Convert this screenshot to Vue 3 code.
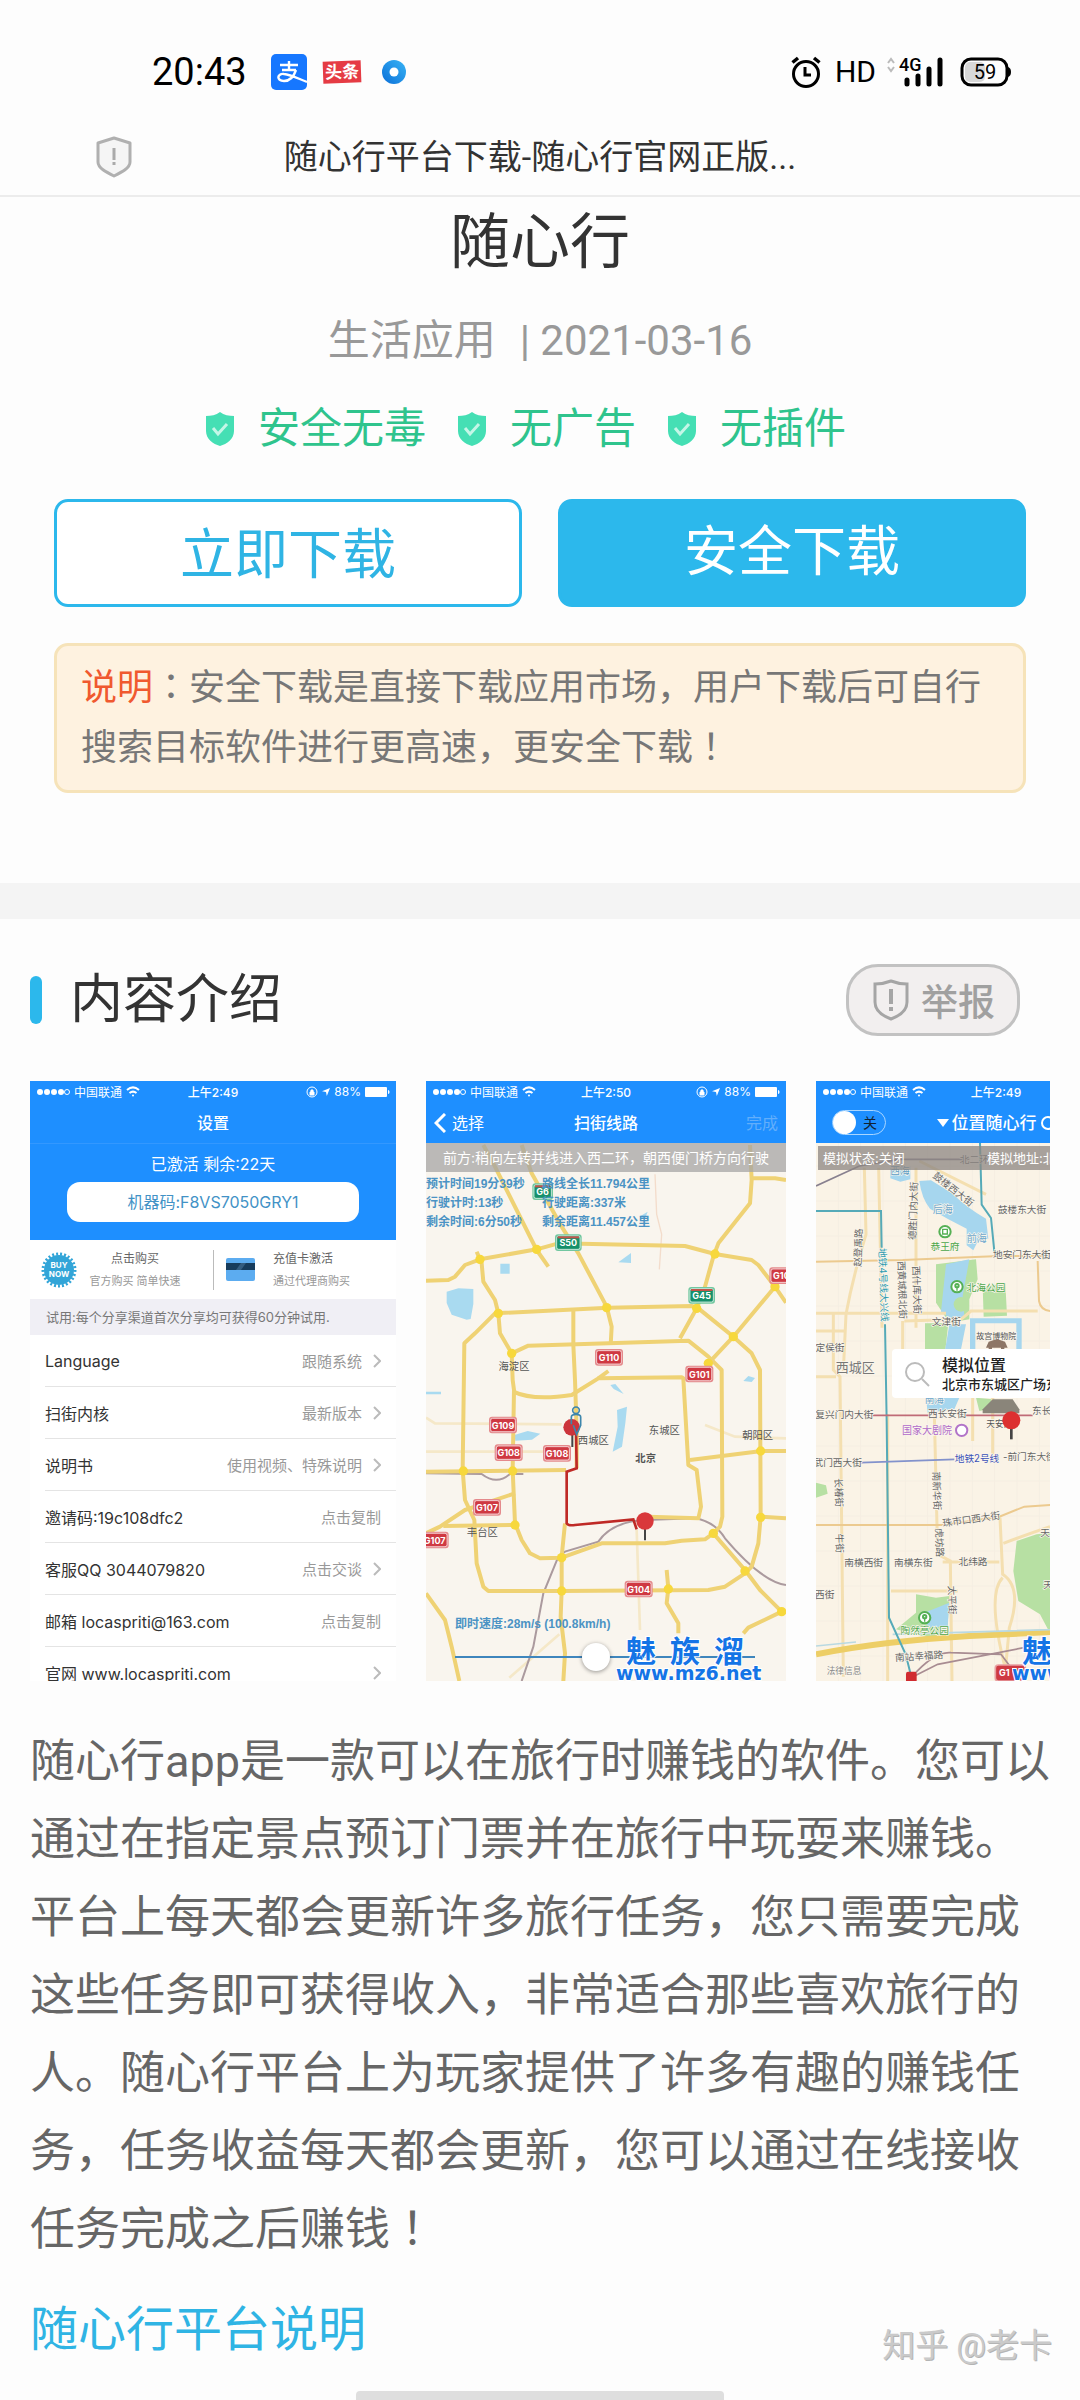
<template>
  <div class="page">
    <div class="status-bar">
      <div class="status-left">
        <span class="clock">20:43</span>
        <svg class="ic-pay" viewBox="0 0 36 36">
          <rect width="36" height="36" rx="5" fill="#1677ff" />
          <g fill="none" stroke="#fff" stroke-width="2.4">
            <path d="M9 11h18M18 7v9M11 16h14" />
            <path d="M25 16c-2 6-6 11-12 11-8 0-7-8 0-7 6 .4 13 4 23 8" />
          </g>
        </svg>
        <span class="ic-news">头条</span>
        <svg class="ic-dot" viewBox="0 0 26 26">
          <defs>
            <linearGradient id="dotFill" x1="0" y1="1" x2="1" y2="0">
              <stop offset="0" stop-color="#0b6fd8" />
              <stop offset="1" stop-color="#38b4f5" />
            </linearGradient>
          </defs>
          <circle cx="13" cy="13" r="12" fill="url(#dotFill)" />
          <circle cx="13" cy="13" r="4.5" fill="#fff" />
        </svg>
      </div>
      <div class="status-right">
        <svg class="ic-alarm" viewBox="0 0 30 32" fill="none" stroke="#000" stroke-width="3">
          <circle cx="15" cy="18" r="12.5" />
          <path d="M1.5 6.5 7 2M28.5 6.5 23 2" stroke-width="3.5" />
          <path d="M14 11v8h6" />
        </svg>
        <span class="hd">HD</span>
        <svg class="ic-signal" viewBox="0 0 58 32">
          <path d="M2 7l3-4 3 4M2 11l3 4 3-4" fill="none" stroke="#bbb" stroke-width="2" />
          <text x="13" y="15" font-size="18" font-weight="500" fill="#000">4G</text>
          <g stroke="#000" stroke-width="5" stroke-linecap="round">
            <path d="M21 24v4M32 20v8M43 13v15M54 4v24" />
          </g>
        </svg>
        <svg class="ic-battery" viewBox="0 0 52 30">
          <rect x="5" y="5" width="20" height="20" rx="5" fill="#d8d8d8" />
          <rect x="2" y="2" width="45" height="26" rx="9" fill="none" stroke="#000" stroke-width="3" />
          <path d="M48 10c4 1 4 9 0 10z" fill="#000" />
          <text x="25" y="22" font-size="20" text-anchor="middle" fill="#000">59</text>
        </svg>
      </div>
    </div>

    <header class="nav">
      <svg class="nav-shield" viewBox="0 0 38 42">
        <path d="M19 2 35 7v19c0 6-8 10-16 14C11 36 3 32 3 26V7z" fill="#f5f5f5" stroke="#b0b0b0" stroke-width="3" stroke-linejoin="round" />
        <path d="M19 12v12M19 26v3" stroke="#aaa" stroke-width="3" />
      </svg>
      <span class="nav-title">随心行平台下载-随心行官网正版...</span>
    </header>

    <section class="hero">
      <h1>随心行</h1>
      <p class="meta"><span>生活应用</span><span class="date">| 2021-03-16</span></p>
      <ul class="badges">
        <li v-for="b in badges" :key="b">
          <svg viewBox="0 0 32 36">
            <path d="M16 1c4 3 9 4 14 4v15c0 8-7 13-14 15C9 33 2 28 2 20V5c5 0 10-1 14-4z" fill="#45dfb4" />
            <path d="M9 17l5 6 9-10" fill="none" stroke="#c4f6e7" stroke-width="3" />
          </svg>
          {{ b }}
        </li>
      </ul>
      <div class="actions">
        <button class="btn" type="button">立即下载</button>
        <button class="btn solid" type="button">安全下载</button>
      </div>
      <p class="note"><em>说明</em><span class="mid">：</span>安全下载是直接下载应用市场，用户下载后可自行搜索目标软件进行更高速，更安全下载<span class="mid">！</span></p>
    </section>

    <section class="intro">
      <div class="intro-head">
        <h2>内容介绍</h2>
        <button class="report" type="button">
          <svg viewBox="0 0 40 44" fill="none" stroke="#a5a5a5" stroke-width="3">
            <path d="M20 3c5 2 10 3 16 3v18c0 9-8 14-16 17C12 38 4 33 4 24V6c6 0 11-1 16-3z" />
            <path d="M20 11v15M20 29v4" stroke-width="4" />
          </svg>
          举报
        </button>
      </div>

      <div class="gallery">
        <article v-for="shot in shots" :key="shot.id" class="shot" :class="shot.id">
          <div class="ios-bar">
            <span class="carrier">
              <svg class="dots" viewBox="0 0 34 8" fill="#fff">
                <circle v-for="n in 4" :key="n" :cx="n * 7 - 3" cy="4" r="3" />
                <circle cx="31" cy="4" r="2.5" fill="none" stroke="#fff" />
              </svg>
              中国联通
              <svg class="wifi" viewBox="0 0 14 11" fill="none" stroke="#fff" stroke-width="2">
                <path d="M1 4c4-3.5 8-3.5 12 0M3.5 7c2.500-2 4.500-2 7 0" />
                <circle cx="7" cy="9.5" r="1" fill="#fff" stroke="none" />
              </svg>
            </span>
            <b>{{ shot.time }}</b>
            <span class="power">
              <svg class="lock" viewBox="0 0 12 12" fill="none" stroke="#fff">
                <circle cx="6" cy="6" r="5" />
                <path d="M4 6h4v3H4zM5 6V4h2v2" fill="#fff" />
              </svg>
              <svg class="arrow" viewBox="0 0 10 10" fill="#fff"><path d="M10 0 6 10 5 5 0 4z" /></svg>
              88%
              <svg class="cell" viewBox="0 0 25 10" fill="#fff"><rect width="22" height="10" rx="1" /><path d="M23 3c2 0 2 4 0 4z" /></svg>
            </span>
          </div>

          <template v-if="shot.id === 'settings'">
            <div class="shot-nav"><span></span><strong>设置</strong><span></span></div>
            <div class="active-box">
              <span>已激活 剩余:22天</span>
              <div class="code">机器码:F8VS7050GRY1</div>
            </div>
            <div class="buy">
              <svg class="buy-now" viewBox="0 0 36 36">
                <circle cx="18" cy="18" r="15" fill="#32a5d8" />
                <circle cx="18" cy="18" r="16" fill="none" stroke="#32a5d8" stroke-width="3" stroke-dasharray="2 2" />
                <text x="18" y="16" font-size="8" font-weight="700" text-anchor="middle" fill="#fff">BUY</text>
                <text x="18" y="25" font-size="8" font-weight="700" text-anchor="middle" fill="#fff">NOW</text>
              </svg>
              <div class="buy-text"><span>点击购买</span><small>官方购买 简单快速</small></div>
              <i class="split"></i>
              <svg class="bank-card" viewBox="0 0 29 23">
                <rect width="29" height="23" rx="2" fill="#5cacf0" />
                <rect y="5" width="29" height="7" fill="#173c5c" />
                <path d="M10 12l5-7h5l-5 7z" fill="#345d80" />
              </svg>
              <div class="buy-text left"><span>充值卡激活</span><small>通过代理商购买</small></div>
            </div>
            <div class="trial">试用:每个分享渠道首次分享均可获得60分钟试用.</div>
            <div v-for="row in rows" :key="row.name" class="row">
              <span>{{ row.name }}</span>
              <span class="row-value">{{ row.value }}</span>
              <svg v-if="row.link" viewBox="0 0 8 14" fill="none" stroke="#bbb" stroke-width="2"><path d="M1 1l6 6-6 6" /></svg>
            </div>
          </template>

          <template v-else-if="shot.id === 'route'">
            <div class="shot-nav">
              <span class="back">
                <svg viewBox="0 0 12 20" fill="none" stroke="#fff" stroke-width="3"><path d="M11 1 2 10l9 9" /></svg>
                选择
              </span>
              <strong>扫街线路</strong>
              <span class="faded">完成</span>
            </div>
            <div class="map">
              <svg viewBox="0 186 1080 1614">
                <rect y="186" width="1080" height="1614" fill="#f9f5ee" />
                <g fill="#a9daf0">
                  <path d="M62 632l35-10 45 2v45l-8 45-12 2-45-15-15-35zM223 548h28v30h-28zM577 544l38-28v30zM640 407l25-15-8 22zM265 1062l40-12 38 8-25 18-50 3zM573 987l30-10-5 50-10 70-28 15 15-75zM553 912l15-3 25 30-30-15zM952 900l15-15 20 6-10 12zM0 932h45v8H0z" />
                </g>
                <g fill="none" stroke="#f5e8c8" stroke-width="8">
                  <path d="M0 1010l27 17 380 3M0 1112h407M632 1347l10 300M837 1032l90 35 153 5M400 1660l-150 130" />
                </g>
                <path d="M687 280l5 120 15 60-7 105" fill="none" stroke="#f3dccb" stroke-width="4" />
                <g fill="none" stroke="#ab9a9e" stroke-width="6">
                  <path d="M287 1800l35-103 30-160 45-110 20-15 100-30q40-60 140-65l150-5q60 10 90 60 110 130 183 140" />
                  <path d="M0 1177l167 2q45 35 85 0h40" />
                </g>
                <g fill="none" stroke="#efd274" stroke-width="12" stroke-linejoin="round">
                  <path v-for="(d, i) in roads" :key="i" :d="d" />
                </g>
                <g fill="#f7d83c">
                  <circle v-for="(p, i) in junctions" :key="i" :cx="p[0]" :cy="p[1]" r="14" />
                </g>
                <path d="M450 1047l2 115-30 10v155q5 8 25 5l175-17 10 30" fill="none" stroke="#bf2a26" stroke-width="8" />
                <g font-size="31" fill="#555" text-anchor="middle">
                  <text v-for="l in districts" :key="l.t" :x="l.x" :y="l.y" :font-weight="l.w">{{ l.t }}</text>
                </g>
                <g v-for="(s, i) in shields" :key="i" font-size="27" font-weight="700" text-anchor="middle">
                  <rect :x="s.x - s.w / 2" :y="s.y - 25" :width="s.w" height="50" rx="9" :fill="s.green ? '#72c7a0' : '#e48a8c'" />
                  <rect :x="s.x - s.w / 2 + 5" :y="s.y - 20" :width="s.w - 10" height="40" rx="6" :fill="s.green ? '#16906a' : '#cf3942'" stroke="#fff" stroke-width="2" />
                  <path v-if="s.green" :d="`M${s.x - s.w / 2 + 8} ${s.y - 16}h${s.w - 16}`" stroke="#c4544a" stroke-width="6" />
                  <text :x="s.x" :y="s.y + 11" fill="#fff">{{ s.t }}</text>
                </g>
                <path d="M439 1050v48M657 1330v48" stroke="#444" stroke-width="6" />
                <circle cx="437" cy="1039" r="25" fill="#cc343b" />
                <circle cx="657" cy="1320" r="26" fill="#d9383b" />
                <g fill="none" stroke="#3d86ac" stroke-width="5">
                  <circle cx="450" cy="988" r="10" />
                  <path d="M436 1030v-22q0-8 14-8t14 8v25l-12 27-10-27" />
                </g>
              </svg>
              <div class="guide">前方:稍向左转并线进入西二环，朝西便门桥方向行驶</div>
              <div class="stats">
                <span v-for="s in stats" :key="s">{{ s }}</span>
              </div>
              <div class="speed">
                <label for="speed">即时速度:28m/s (100.8km/h)</label>
                <input id="speed" type="range" min="0" max="60" value="28" />
              </div>
              <svg class="mark" viewBox="0 0 150 50" fill="#1474e6" stroke="#fff" stroke-width="2" paint-order="stroke" font-weight="700">
                <text x="10" y="27" font-size="30">魅</text>
                <text x="54" y="27" font-size="30">族</text>
                <text x="98" y="27" font-size="30">溜</text>
                <text x="0" y="45" class="site">www.mz6.net</text>
              </svg>
            </div>
          </template>

          <template v-else>
            <div class="shot-nav">
              <label class="toggle"><input type="checkbox" /><i></i>关</label>
              <strong class="place"><svg viewBox="0 0 12 8"><path d="M0 0h12L6 8z" fill="#fff" /></svg>位置随心行<svg class="loop" viewBox="0 0 16 16"><circle cx="8" cy="8" r="6" fill="none" stroke="#fff" stroke-width="2" /></svg></strong>
              <span></span>
            </div>
            <div class="map">
              <svg viewBox="0 186 1080 1614">
                <rect y="186" width="1080" height="1614" fill="#faf3e6" />
                <g fill="none" stroke="#f5eee2" stroke-width="3">
                  <path v-for="n in 16" :key="n" :d="`M0 ${n * 105 + 150}h1080M${n * 67} 186v1614`" />
                </g>
                <g fill="#b7e0a3">
                  <path d="M360 550l120-15 5 60-25 60v60l-60 10-40-60zM500 618l68-12 5 98-70 3zM327 727h70l-10 90h-60zM480 950l50 5 10 25-50 10zM240 1645l60-50v-55l60 10 40-5-5 90 5 20-60 15zM592 1470l10-90 60-20 100-10v420l-90-170-65-40zM0 1205l30 8 5 25-35 12z" />
                </g>
                <g fill="#a6d6ee">
                  <path d="M223 260l60-5v40l-30 7-30-10zM310 300l35-2 65 40q40 40 100 75l7 60-30 5-15 30-20-15v-50q-60-30-110-60-25-30-32-83zM390 550l70-15-20 110 5 60-20 22-50-35zM400 730h50l-15 75-50 15zM330 950h100l-15 35-80 10zM325 1595l75-30-5 70-50 5-20-15z" />
                  <path d="M462 712h155v105h-16v-90H478v90h-16z" />
                </g>
                <circle cx="435" cy="670" r="22" fill="#b7e0a3" />
                <g fill="none" stroke="#f4dfb0" stroke-width="9">
                  <path d="M145 260l5 200q-40 130-60 240l-8 170M188 260l10 480M300 260v480M0 697h390M0 750h90M52 697v170l20 20 10 900M215 1000v800M260 720v160M355 1000l10 420 38 20 5 360M265 720l170-5 30-25h200M552 1310l8 170q60 40 20 160l-15 160M560 1490q-50 50 10 280M562 1387q80-30 140-50M225 1530h200M380 1443h170M0 887h60M530 900v220M470 950v130M310 240l200 100" />
                </g>
                <g fill="none" stroke="#ecca8f" stroke-width="6">
                  <path d="M0 542l260-5 290-12h530M0 1332h380l170-25 75-30 150-10M665 540l4 120q5 30 40 30" />
                </g>
                <path d="M0 1720q200-40 460-55l620-30" fill="none" stroke="#edce66" stroke-width="18" />
                <path d="M0 1695l120-12M230 1660l850-25" fill="none" stroke="#b9d9e2" stroke-width="5" />
                <g fill="none" stroke="#55aab8" stroke-width="6">
                  <path d="M0 390h195l2 110M207 730l5 290 7 590 50 110 15 60M492 186l5 185 28 40 10 100" />
                </g>
                <path d="M0 315l130-60 120-20h210" fill="none" stroke="#88808f" stroke-width="5" />
                <path d="M170 1003h170M450 1003h200" stroke="#bf6b77" stroke-width="5" />
                <path d="M135 1145l280-10" stroke="#8292cc" stroke-width="5" />
                <path d="M285 1790l80-40 310-60M285 1790q70-80 120-75l150 5 60 80" fill="none" stroke="#a88c92" stroke-width="5" />
                <g text-anchor="middle" paint-order="stroke" stroke="#fbf6ec" stroke-width="4">
                  <text
                    v-for="(l, i) in streets"
                    :key="i"
                    :transform="`translate(${l[1]} ${l[2]}) rotate(${l[3] || 0})`"
                    dy="10"
                    :font-size="l[5] || 29"
                    :fill="l[4] || '#666'"
                  >{{ l[0] }}</text>
                </g>
                <g fill="none" stroke="#55b054" stroke-width="6">
                  <circle cx="387" cy="452" r="17" fill="#fff" /><path d="M380 445h14v14h-14z" stroke-width="4" />
                  <circle cx="423" cy="617" r="17" fill="#fff" /><circle cx="423" cy="614" r="5" /><path d="M423 617v12" stroke-width="4" />
                  <circle cx="326" cy="1610" r="17" fill="#fff" /><circle cx="326" cy="1607" r="5" /><path d="M326 1610v12" stroke-width="4" />
                </g>
                <circle cx="437" cy="1048" r="17" fill="#fff" stroke="#b274c9" stroke-width="6" />
                <path d="M510 800h65l-8-18-24-8-25 8zM518 800h10v14h-10zM555 800h10v14h-10z" fill="#8d7666" />
                <path d="M500 985l30-30h60l20 30v12H500z" fill="#8a857a" />
                <path d="M586 1020v55" stroke="#444" stroke-width="8" />
                <circle cx="586" cy="1018" r="27" fill="#dc3030" />
                <rect x="270" y="1772" width="32" height="34" rx="6" fill="#d02b30" />
                <rect x="538" y="1752" width="90" height="48" rx="9" fill="#cf3942" stroke="#e8a0a2" stroke-width="5" />
                <text x="565" y="1786" font-size="27" font-weight="700" text-anchor="middle" fill="#fff">G1</text>
              </svg>
              <div class="sim"><span>模拟状态:关闭</span><span>模拟地址:北京市东城区</span></div>
              <div class="callout">
                <svg viewBox="0 0 26 26" fill="none" stroke="#bbb" stroke-width="2"><circle cx="11" cy="11" r="9" /><path d="M18 18l7 7" /></svg>
                <div><strong>模拟位置</strong><span>北京市东城区广场东侧路</span></div>
              </div>
              <svg class="mark" viewBox="0 0 150 50" fill="#1474e6" stroke="#fff" stroke-width="2" paint-order="stroke" font-weight="700">
                <text x="10" y="27" font-size="30">魅</text>
                <text x="54" y="27" font-size="30">族</text>
                <text x="98" y="27" font-size="30">溜</text>
                <text x="0" y="45" class="site">www.mz6.net</text>
              </svg>
            </div>
          </template>
        </article>
      </div>

      <p class="desc">随心行app是一款可以在旅行时赚钱的软件。您可以通过在指定景点预订门票并在旅行中玩耍来赚钱。平台上每天都会更新许多旅行任务，您只需要完成这些任务即可获得收入，非常适合那些喜欢旅行的人。随心行平台上为玩家提供了许多有趣的赚钱任务，任务收益每天都会更新，您可以通过在线接收任务完成之后赚钱<span class="mid">！</span></p>
      <a class="more" href="#">随心行平台说明</a>
    </section>

    <span class="watermark">知乎 @老卡</span>
    <i class="home-bar"></i>
  </div>
</template>

<script setup>
const badges = ['安全无毒', '无广告', '无插件'];

const shots = [
  { id: 'settings', time: '上午2:49' },
  { id: 'route', time: '上午2:50' },
  { id: 'place-map', time: '上午2:49' }
];

const rows = [
  { name: 'Language', value: '跟随系统', link: true },
  { name: '扫街内核', value: '最新版本', link: true },
  { name: '说明书', value: '使用视频、特殊说明', link: true },
  { name: '邀请码:19c108dfc2', value: '点击复制', link: false },
  { name: '客服QQ 3044079820', value: '点击交谈', link: true },
  { name: '邮箱 locaspriti@163.com', value: '点击复制', link: false },
  { name: '官网 www.locaspriti.com', value: '', link: true }
];

const stats = [
  '预计时间19分39秒', '路线全长11.794公里',
  '行驶计时:13秒', '行驶距离:337米',
  '剩余时间:6分50秒', '剩余距离11.457公里'
];

// 地图坐标为 3 倍尺寸
const roads = [
  'M172 192L207 257 332 507 367 557',
  'M287 192L317 277 407 437 457 517 542 677 557 737 554 792',
  'M0 599L67 597 87 587 117 552 162 535 332 505 397 487 777 495 867 519 977 537 997 552 1047 617 1080 665',
  'M152 512L167 547 172 602 207 657 217 697 222 757 257 817 260 897 264 927 260 1167 267 1327 287 1377 312 1417 342 1432 407 1430 527 1387 717 1387 767 1379 837 1375 862 1357 882 1337 889 1307 887 867 877 857 847 827 787 779 307 794 257 817',
  'M972 192L977 297 972 367 877 487 862 527 837 617 812 682 762 772',
  'M977 292L1047 292 1080 297',
  'M114 867L115 787 147 757 207 697 547 680 797 675 817 682 922 767 977 817 1002 867 1004 1307 997 1387 977 1457 957 1477 897 1517 847 1527 407 1530 187 1530 172 1517 152 1447 145 1317 117 1257 110 1167z',
  'M1047 617L922 767 847 847',
  'M442 687L442 792 447 897 452 1047 452 1162',
  'M262 932Q320 960 437 942L517 892 767 889 772 892 787 1152 812 1167 825 1277 817 1312 667 1307',
  'M517 892L547 870',
  'M0 1172L420 1167',
  'M792 1137L1007 1110 1080 1110',
  'M1004 1307L1080 1312',
  'M417 1327L407 1427 407 1527 404 1607 417 1717 412 1800',
  'M862 1357L957 1467 1002 1527 1067 1592 1080 1592',
  'M1067 1592L967 1640 952 1657',
  'M0 1537L57 1617 77 1697 100 1800',
  'M722 1467L727 1522 722 1567 757 1627 757 1657',
  'M0 1357L42 1337 117 1287 267 1237',
  'M52 1335L267 1332'
];

const junctions = [
  [162, 535], [332, 505], [867, 519], [1047, 617], [217, 697], [542, 680], [812, 682],
  [922, 767], [257, 817], [847, 847], [112, 1170], [260, 1170], [267, 1332], [407, 1430],
  [407, 1530], [862, 1357], [957, 1470], [727, 1524], [1004, 1110], [1004, 1309], [1067, 1592]
];

const districts = [
  { t: '海淀区', x: 264, y: 866 },
  { t: '西城区', x: 502, y: 1090 },
  { t: '东城区', x: 715, y: 1058 },
  { t: '朝阳区', x: 995, y: 1075 },
  { t: '北京', x: 659, y: 1143, w: 700 },
  { t: '丰台区', x: 169, y: 1365 }
];

const shields = [
  { t: 'G6', x: 350, y: 332, w: 62, green: true },
  { t: 'S50', x: 427, y: 485, w: 80, green: true },
  { t: 'G45', x: 827, y: 643, w: 80, green: true },
  { t: 'G101', x: 1072, y: 584, w: 84 },
  { t: 'G110', x: 549, y: 829, w: 84 },
  { t: 'G101', x: 820, y: 879, w: 84 },
  { t: 'G109', x: 231, y: 1032, w: 84 },
  { t: 'G108', x: 248, y: 1115, w: 84 },
  { t: 'G108', x: 393, y: 1117, w: 84 },
  { t: 'G107', x: 183, y: 1279, w: 84 },
  { t: 'G107', x: 26, y: 1377, w: 84 },
  { t: 'G104', x: 638, y: 1524, w: 84 }
];

// 文字, x, y, 角度, 颜色, 字号
const streets = [
  ['西海', 252, 270, 0, '#5b9cc4'],
  ['鼓楼西大街', 412, 325, 38],
  ['德胜门内大街', 292, 390, -88],
  ['后海', 380, 385, 0, '#6fa8cc', 30],
  ['前海', 482, 472, 0, '#6fa8cc', 30],
  ['鼓楼东大街', 618, 385],
  ['恭王府', 387, 497, 0, '#4ba64a'],
  ['地安门东大街', 618, 520],
  ['赵登禹路', 127, 500, -88],
  ['地铁4号线大兴线', 202, 612, 88, '#2d9bb0'],
  ['西黄城根北街', 258, 627, 88],
  ['西什库大街', 302, 627, 88],
  ['北海公园', 510, 620, 0, '#4ba64a'],
  ['文津街', 391, 722],
  ['故宫博物院', 541, 765, 0, '#555', 24],
  ['定侯街', 42, 799],
  ['西城区', 118, 862, 0, '#777', 39],
  ['北二环', 475, 235],
  ['南海', 355, 957, 0, '#6fa8cc'],
  ['复兴门内大街', 85, 1002],
  ['西长安街', 394, 998],
  ['东长安街', 706, 990],
  ['天安门', 550, 1028, 0, '#555', 26],
  ['国家大剧院', 333, 1050, 0, '#b06ac9', 30],
  ['武门西大街', 65, 1145],
  ['地铁2号线', 483, 1133, 0, '#3a51b8'],
  ['-前门东大街', 640, 1128],
  ['长椿街', 68, 1235, 88],
  ['南新华街', 362, 1230, 88],
  ['珠市口西大街', 466, 1315, -8],
  ['牛街', 70, 1387, 88],
  ['虎坊路', 370, 1385, 88],
  ['南横西街', 143, 1444],
  ['南横东街', 292, 1444],
  ['北纬路', 471, 1442],
  ['天坛', 702, 1355],
  ['西街', 26, 1542],
  ['太平街', 408, 1557, 88],
  ['天坛公园', 740, 1512],
  ['陶然亭公园', 326, 1650, 0, '#4ba64a'],
  ['南站幸福路', 309, 1726, -4],
  ['法律信息', 84, 1770, 0, '#888', 26]
];
</script>

<style>
body {
  margin: 0;
  background: #fdfdfd;
}
</style>

<style scoped>
.page {
  position: relative;
  min-height: 100vh;
  background: #fdfdfd;
  color: #333;
  font-family: Roboto, 'Noto Sans CJK SC', sans-serif;
  overflow: hidden;
}
.page * {
  box-sizing: border-box;
}
h1, h2, p, ul {
  margin: 0;
  padding: 0;
  font-weight: 400;
}
button {
  font-family: inherit;
  cursor: pointer;
}
svg {
  display: block;
  flex-shrink: 0;
}
.mid {
  font-family: 'Noto Sans CJK TC', sans-serif;
  line-height: 1;
}

.status-bar {
  display: flex;
  justify-content: space-between;
  align-items: center;
  height: 116px;
  padding: 28px 68px 0 152px;
  color: #000;
}
.status-left,
.status-right {
  display: flex;
  align-items: center;
}
.clock {
  margin-right: 24px;
  font-size: 38px;
}
.ic-pay { width: 36px; height: 36px; }
.ic-news {
  margin: 0 20px 0 16px;
  padding: 0 2px;
  background: #e53b44;
  color: #fff;
  font-size: 17px;
  font-weight: 700;
  line-height: 22px;
  transform: rotate(-2deg);
}
.ic-dot { width: 26px; height: 26px; }
.ic-alarm { width: 30px; height: 32px; }
.hd {
  margin: 0 10px 0 14px;
  font-size: 30px;
  line-height: 32px;
}
.ic-signal { width: 58px; height: 32px; }
.ic-battery { width: 52px; height: 30px; margin-left: 16px; }

.nav {
  display: grid;
  grid-template-columns: 1fr auto 1fr;
  align-items: center;
  height: 81px;
  padding: 2px 95px 0;
  border-bottom: 2px solid #ececec;
}
.nav-shield { width: 38px; height: 42px; }
.nav-title {
  font-size: 34px;
  line-height: 48px;
}

.hero {
  padding: 10px 54px 90px;
  border-bottom: 36px solid #f4f4f4;
}
.hero h1 {
  font-size: 60px;
  line-height: 72px;
  text-align: center;
}
.meta {
  display: flex;
  justify-content: center;
  gap: 24px;
  margin-top: 32px;
  color: #999;
  font-size: 42px;
  line-height: 60px;
}
.badges {
  display: flex;
  justify-content: center;
  gap: 30px;
  margin-top: 28px;
  padding-right: 30px;
  color: #2fc48d;
  font-size: 42px;
  line-height: 60px;
  list-style: none;
}
.badges li {
  display: flex;
  align-items: center;
  gap: 22px;
}
.badges svg { width: 32px; height: 36px; }
.actions {
  display: grid;
  grid-template-columns: 1fr 1fr;
  gap: 36px;
  margin-top: 40px;
}
.btn {
  height: 108px;
  padding: 0 0 6px;
  border: 3px solid #2cb8ec;
  border-radius: 14px;
  background: #fff;
  color: #2fb4e4;
  font-size: 54px;
}
.btn.solid {
  padding-bottom: 12px;
  background: #2cb8ec;
  color: #fff;
}
.note {
  margin-top: 36px;
  padding: 12px 24px;
  border: 3px solid #f6e3b9;
  border-radius: 14px;
  background: #fef2e0;
  color: #777;
  font-size: 36px;
  line-height: 60px;
}
.note em {
  color: #f0592f;
  font-style: normal;
}

.intro { padding: 45px 30px 34px; }
.intro-head {
  display: flex;
  justify-content: space-between;
  align-items: center;
  padding-right: 30px;
}
.intro-head h2 {
  display: flex;
  align-items: center;
  gap: 28px;
  font-size: 53px;
  line-height: 72px;
}
.intro-head h2::before {
  content: '';
  width: 12px;
  height: 48px;
  border-radius: 6px;
  background: #2cb8ec;
}
.report {
  display: flex;
  align-items: center;
  justify-content: center;
  gap: 10px;
  width: 174px;
  height: 72px;
  padding: 0;
  border: 3px solid #c2c2c2;
  border-radius: 32px;
  background: #f2efef;
  color: #a0a0a0;
  font-size: 37px;
  font-weight: 500;
}
.report svg { width: 40px; height: 44px; }

.gallery {
  display: flex;
  gap: 30px;
  margin-top: 45px;
  overflow: hidden;
  font-family: Inter, 'Noto Sans CJK SC', sans-serif;
}
.shot {
  flex: none;
  width: 360px;
  height: 600px;
  background: #fff;
  overflow: hidden;
}
.shot.settings { width: 366px; }
.ios-bar {
  display: grid;
  grid-template-columns: 1fr auto 1fr;
  align-items: center;
  height: 21px;
  padding: 0 6px;
  background: #1e8fff;
  color: #fff;
  font-size: 12px;
}
.ios-bar b { font-weight: 500; }
.carrier,
.power {
  display: flex;
  align-items: center;
  gap: 4px;
}
.power { justify-content: flex-end; }
.dots { width: 34px; height: 8px; }
.wifi { width: 14px; height: 11px; }
.lock { width: 12px; height: 12px; }
.arrow { width: 8px; height: 8px; }
.cell { width: 25px; height: 10px; }
.shot-nav {
  display: grid;
  grid-template-columns: 1fr auto 1fr;
  align-items: center;
  height: 41px;
  padding: 0 8px;
  background: #1e8fff;
  color: #fff;
  font-size: 16px;
  line-height: 24px;
}
.shot-nav strong { font-weight: 500; }
.back {
  display: flex;
  align-items: center;
  gap: 6px;
}
.back svg { width: 12px; height: 20px; }
.faded {
  color: #62aefb;
  text-align: right;
}

.active-box {
  height: 97px;
  padding: 8px 37px 18px;
  border-top: 1px solid #3398ff;
  background: #1e8fff;
  color: #fff;
  font-size: 16px;
  line-height: 24px;
  text-align: center;
}
.code {
  margin-top: 6px;
  border-radius: 13px;
  background: #fff;
  color: #4292c6;
  line-height: 40px;
}
.buy {
  display: flex;
  align-items: center;
  height: 59px;
  padding-left: 11px;
  color: #666;
}
.buy-now { width: 36px; height: 36px; }
.buy-text {
  display: flex;
  flex-direction: column;
  width: 116px;
  align-items: center;
  font-size: 12px;
  line-height: 22px;
}
.buy-text small {
  color: #999;
  font-size: 11px;
}
.buy-text.left { align-items: flex-start; }
.split {
  width: 1px;
  height: 40px;
  margin: 0 12px 0 20px;
  background: #bbb;
}
.bank-card { width: 29px; height: 23px; margin-right: 18px; }
.trial {
  padding-left: 16px;
  background: #f0eff5;
  color: #777;
  font-size: 13px;
  line-height: 36px;
  white-space: nowrap;
}
.row {
  display: flex;
  align-items: center;
  gap: 11px;
  height: 52px;
  margin-left: 15px;
  padding-right: 15px;
  border-bottom: 1px solid #e4e4e4;
  color: #333;
  font-size: 16px;
  white-space: nowrap;
}
.row-value {
  margin-left: auto;
  color: #999;
  font-size: 15px;
}
.row svg { width: 8px; height: 14px; }

.map {
  position: relative;
  height: 538px;
}
.guide {
  position: absolute;
  top: 0;
  left: 0;
  right: 0;
  background: rgba(166, 164, 164, 0.75);
  color: #fff;
  font-size: 14px;
  line-height: 29px;
  text-align: center;
  white-space: nowrap;
}
.stats {
  position: absolute;
  top: 32px;
  left: 0;
  display: grid;
  grid-template-columns: 116px auto;
  color: #4b93c4;
  font-family: 'Liberation Sans', 'Noto Sans CJK SC', sans-serif;
  font-size: 12px;
  font-weight: 600;
  line-height: 19px;
  white-space: nowrap;
}
.speed {
  position: absolute;
  left: 29px;
  right: 31px;
  bottom: 10px;
  display: flex;
  flex-direction: column;
  gap: 12px;
  color: #4b93c4;
  font-family: 'Liberation Sans', 'Noto Sans CJK SC', sans-serif;
  font-size: 12px;
  font-weight: 600;
}
.speed input {
  width: 100%;
  height: 28px;
  margin: 0;
  appearance: none;
  background: linear-gradient(#3f86bd, #3f86bd) center / 100% 2px no-repeat;
}
.speed input::-webkit-slider-thumb {
  width: 28px;
  height: 28px;
  appearance: none;
  border-radius: 50%;
  background: #fff;
  box-shadow: 0 1px 4px rgba(0, 0, 0, 0.4);
}
.mark {
  position: absolute;
  left: 190px;
  bottom: -4px;
  width: 150px;
  height: 50px;
}
.place-map .mark { left: 196px; }
.site {
  font-family: 'DejaVu Sans', sans-serif;
  font-size: 19px;
  font-weight: 700;
}

.toggle {
  position: relative;
  display: flex;
  align-items: center;
  justify-content: flex-end;
  width: 54px;
  height: 25px;
  margin-left: 8px;
  padding-right: 8px;
  border: 1px solid #a9d6ff;
  border-radius: 13px;
  color: #123;
  font-size: 14px;
}
.toggle input {
  position: absolute;
  inset: 0;
  margin: 0;
  opacity: 0;
}
.toggle i {
  width: 23px;
  height: 23px;
  margin-right: auto;
  border-radius: 50%;
  background: #fff;
}
.place {
  display: flex;
  align-items: center;
  gap: 3px;
  font-size: 17px;
}
.place svg { width: 12px; height: 8px; }
.place .loop { width: 16px; height: 16px; }
.sim {
  position: absolute;
  top: 3px;
  left: 2px;
  right: 0;
  display: grid;
  grid-template-columns: 164px auto;
  padding-left: 5px;
  background: rgba(140, 134, 130, 0.75);
  color: #fff;
  font-size: 13px;
  line-height: 24px;
  white-space: nowrap;
}
.callout {
  position: absolute;
  top: 206px;
  left: 76px;
  right: 0;
  display: flex;
  align-items: center;
  gap: 12px;
  height: 49px;
  padding-left: 12px;
  border-radius: 4px;
  background: #fff;
  color: #222;
}
.callout svg { width: 26px; height: 26px; }
.callout strong,
.callout span {
  display: block;
  font-weight: 500;
  font-size: 16px;
  line-height: 20px;
  white-space: nowrap;
}
.callout span {
  font-size: 13px;
  line-height: 18px;
}

.desc {
  margin: 42px -2px 0 0;
  color: #666;
  font-size: 45px;
  line-height: 78px;
}
.more {
  display: inline-block;
  margin-top: 26px;
  color: #2fb4e4;
  font-size: 48px;
  line-height: 70px;
  text-decoration: none;
}
.watermark {
  position: absolute;
  right: 28px;
  bottom: 30px;
  color: #cacaca;
  font-size: 33px;
  line-height: 48px;
  text-shadow: 1px 1px 0 #b4b4b4;
}
.home-bar {
  position: absolute;
  bottom: 0;
  left: 33%;
  right: 33%;
  height: 9px;
  border-radius: 4px 4px 0 0;
  background: #dedede;
}
</style>
